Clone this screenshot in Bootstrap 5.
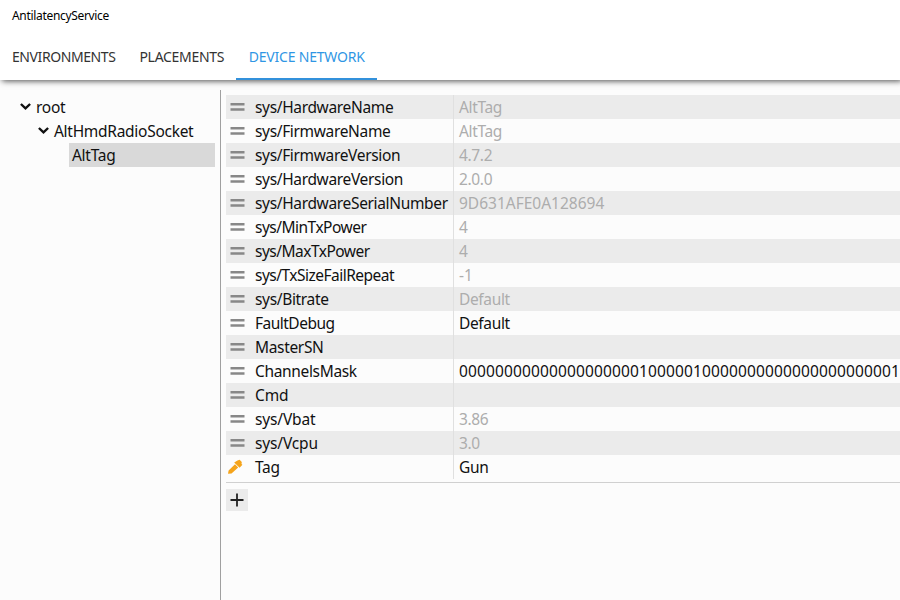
<!DOCTYPE html>
<html lang="en">
<head>
<meta charset="utf-8">
<title>AntilatencyService</title>
<meta name="viewport" content="width=device-width, initial-scale=1">
<link href="https://cdn.jsdelivr.net/npm/bootstrap@5.3.0/dist/css/bootstrap.min.css" rel="stylesheet">
<style>
body { font-family: "Noto Sans", "Open Sans", sans-serif; font-size: 15.5px; line-height: 24px; color: #111; background: #fcfcfc; }
.app-header { height: 80px; background: #fff; box-shadow: 2px 1px 6px rgba(0,0,0,.7); z-index: 2; }
.app-title { height: 34px; line-height: 32px; font-size: 12px; letter-spacing: -.32px; padding-left: 12px; color: #000; }
.app-tabs { height: 46px; font-size: 14px; }
.app-tabs .nav-link { padding: 0 12px; line-height: 46px; color: #333; border-bottom: 2px solid transparent; height: 46px; letter-spacing: -.42px; }
.app-tabs .nav-link:nth-child(2) { letter-spacing: -.29px; }
.app-tabs .nav-link.active { color: #2f96e4; border-color: #3391db; letter-spacing: -.2px; padding-left: 12.500px; }
.app-body { padding-top: 10px; }
.tree { width: 221px; padding: 5px 5px 0 20px; border-right: 1px solid #a0a0a0; }
.tree-row { height: 24px; letter-spacing: -.28px; }
.tree-row svg { width: 11px; height: 24px; margin-right: 5px; }
.level-1 { padding-left: 18px; }
.level-2 { margin-left: 49px; padding-left: 3px; background: #d9d9d9; }
.props { padding: 5px 0 0 5px; }
.prop { height: 24px; }
.prop:nth-child(odd) { background: #ebebeb; }
.prop svg { width: 29px; height: 24px; }
.prop-name { width: 199px; border-right: 1px solid #e0e0e0; letter-spacing: -.34px; }
.tight { letter-spacing: -.51px; }
.loose { letter-spacing: -.15px; }
.prop-value { padding-left: 5px; letter-spacing: -.35px; }
.prop-value.digits { letter-spacing: 0; }
.prop-value.mask { letter-spacing: .135px; }
.locked { color: #adadad; }
.list-end { border-bottom: 1px solid #d0d0d0; padding-bottom: 3px; }
.btn-add { width: 22px; height: 22px; margin-top: 6px; background: #ebebeb; }
</style>
</head>
<body class="vh-100 overflow-hidden d-flex flex-column">
<svg class="d-none">
  <symbol id="chevron" viewBox="0 0 11 24"><path d="M.9 9 5.500 13.400 10.100 9" fill="none" stroke="#111" stroke-width="2.400"/></symbol>
  <symbol id="bars" viewBox="0 0 29 24"><path d="M4.500 9.200h14M4.500 14.500h14" stroke="#888" stroke-width="2.600"/></symbol>
</svg>
<header class="app-header position-relative flex-shrink-0">
  <div class="app-title">AntilatencyService</div>
  <nav class="nav app-tabs">
    <a class="nav-link" href="#">ENVIRONMENTS</a>
    <a class="nav-link" href="#">PLACEMENTS</a>
    <a class="nav-link active" href="#">DEVICE NETWORK</a>
  </nav>
</header>
<main class="app-body d-flex flex-grow-1">
  <aside class="tree flex-shrink-0">
    <div class="tree-row d-flex"><svg><use href="#chevron"/></svg><span>root</span></div>
    <div class="tree-row d-flex level-1"><svg><use href="#chevron"/></svg><span>AltHmdRadioSocket</span></div>
    <div class="tree-row level-2"><span>AltTag</span></div>
  </aside>
  <section class="props flex-grow-1 overflow-hidden text-nowrap">
    <div class="list-end">
      <div class="prop d-flex"><svg><use href="#bars"/></svg><div class="prop-name">sys/HardwareName</div><div class="prop-value locked">AltTag</div></div>
      <div class="prop d-flex"><svg><use href="#bars"/></svg><div class="prop-name">sys/FirmwareName</div><div class="prop-value locked">AltTag</div></div>
      <div class="prop d-flex"><svg><use href="#bars"/></svg><div class="prop-name">sys/FirmwareVersion</div><div class="prop-value locked">4.7.2</div></div>
      <div class="prop d-flex"><svg><use href="#bars"/></svg><div class="prop-name">sys/HardwareVersion</div><div class="prop-value locked">2.0.0</div></div>
      <div class="prop d-flex"><svg><use href="#bars"/></svg><div class="prop-name">sys/HardwareSerialNumber</div><div class="prop-value digits locked">9D631AFE0A128694</div></div>
      <div class="prop d-flex"><svg><use href="#bars"/></svg><div class="prop-name tight">sys/MinTxPower</div><div class="prop-value locked">4</div></div>
      <div class="prop d-flex"><svg><use href="#bars"/></svg><div class="prop-name tight">sys/MaxTxPower</div><div class="prop-value locked">4</div></div>
      <div class="prop d-flex"><svg><use href="#bars"/></svg><div class="prop-name tight">sys/TxSizeFailRepeat</div><div class="prop-value digits locked">-1</div></div>
      <div class="prop d-flex"><svg><use href="#bars"/></svg><div class="prop-name">sys/Bitrate</div><div class="prop-value locked">Default</div></div>
      <div class="prop d-flex"><svg><use href="#bars"/></svg><div class="prop-name tight">FaultDebug</div><div class="prop-value">Default</div></div>
      <div class="prop d-flex"><svg><use href="#bars"/></svg><div class="prop-name">MasterSN</div><div class="prop-value"></div></div>
      <div class="prop d-flex"><svg><use href="#bars"/></svg><div class="prop-name">ChannelsMask</div><div class="prop-value mask">0000000000000000000010000010000000000000000000001</div></div>
      <div class="prop d-flex"><svg><use href="#bars"/></svg><div class="prop-name loose">Cmd</div><div class="prop-value"></div></div>
      <div class="prop d-flex"><svg><use href="#bars"/></svg><div class="prop-name loose">sys/Vbat</div><div class="prop-value locked">3.86</div></div>
      <div class="prop d-flex"><svg><use href="#bars"/></svg><div class="prop-name loose">sys/Vcpu</div><div class="prop-value locked">3.0</div></div>
      <div class="prop d-flex"><svg viewBox="0 0 29 24"><path d="M2 18.800 2.600 15.400 9 9.300 12.200 12.500 5.500 18.600ZM8.200 7.500 11.500 5.600 13.600 4.800 15.800 7 15.500 9 16.400 9.800 13.600 12.800Z" fill="#f5a41b"/></svg><div class="prop-name">Tag</div><div class="prop-value">Gun</div></div>
    </div>
    <button class="btn btn-add border-0 rounded-0 p-0 d-block" aria-label="Add"><svg class="d-block" width="22" height="22"><path d="M4.500 11h13M11 4.500v13" stroke="#222" stroke-width="1.800"/></svg></button>
  </section>
</main>
<script src="https://cdn.jsdelivr.net/npm/bootstrap@5.3.0/dist/js/bootstrap.bundle.min.js"></script>
</body>
</html>
